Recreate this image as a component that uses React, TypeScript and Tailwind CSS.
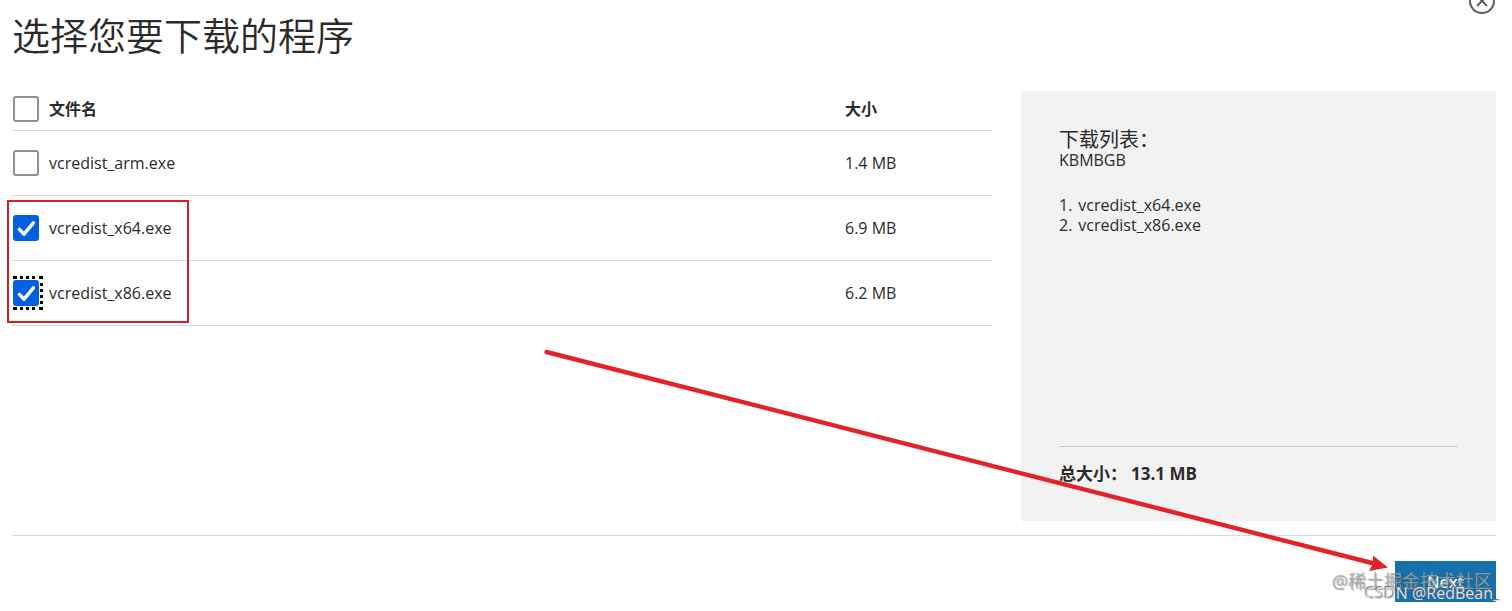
import { useState } from "react";

const files = [
  { name: "vcredist_arm.exe", size: "1.4 MB" },
  { name: "vcredist_x64.exe", size: "6.9 MB" },
  { name: "vcredist_x86.exe", size: "6.2 MB" },
];

type CheckboxProps = {
  id: string;
  label: string;
  checked: boolean;
  outlined?: boolean;
  onChange: () => void;
};

function Checkbox({ id, label, checked, outlined, onChange }: CheckboxProps) {
  return (
    <div className="flex items-center gap-[10px]">
      <span className="relative grid ml-px">
        <input
          id={id}
          type="checkbox"
          checked={checked}
          onChange={onChange}
          className="[grid-area:1/1] appearance-none size-[26px] rounded-[3px] border-2 border-[#8f8f96] bg-white checked:border-[#0460e0] checked:bg-[#0460e0]"
        />
        {checked && (
          <svg viewBox="0 0 26 26" className="[grid-area:1/1] size-[26px] pointer-events-none" fill="none" stroke="white" strokeWidth="3.4" strokeLinecap="round" strokeLinejoin="round">
            <path d="M6.4 14.4l4.6 4.8L20.4 7.8" />
          </svg>
        )}
        {outlined && (
          <span className="absolute -top-1 -bottom-1 left-0 -right-1 border-y-[3px] border-r-[3px] border-dotted border-black pointer-events-none" />
        )}
      </span>
      <label htmlFor={id}>{label}</label>
    </div>
  );
}

function Annotations() {
  return (
    <svg width="1512" height="611" className="absolute top-0 left-0 pointer-events-none" fill="none">
      <rect x="8" y="201" width="180" height="121" stroke="#d71f26" strokeWidth="2" />
      <path d="M546.5 352L1374 563.5" stroke="#e3222a" strokeWidth="4.4" strokeLinecap="round" />
      <path d="M1388 567.5L1369 571L1373 563.5L1373 555.5Z" fill="#e3222a" />
    </svg>
  );
}

function Watermark() {
  return (
    <div className="absolute top-[571px] right-5 flex flex-col items-end pointer-events-none whitespace-nowrap">
      <span className="text-lg leading-5 text-[#a6a6a6]/80 [text-shadow:1px_1px_1px_#55555580]">@稀土掘金技术社区</span>
      <span className="-mt-2 -mr-2 text-base leading-5 text-[#dddddd] [text-shadow:-1px_-1px_1px_#666666]">CSDN @RedBean_</span>
    </div>
  );
}

export default function App() {
  const [selected, setSelected] = useState(["vcredist_x64.exe", "vcredist_x86.exe"]);
  const chosen = files.filter((f) => selected.includes(f.name));
  const total = chosen.reduce((sum, f) => sum + parseFloat(f.size), 0);

  const toggle = (name: string) =>
    setSelected((prev) => (prev.includes(name) ? prev.filter((n) => n !== name) : [...prev, name]));

  const toggleAll = () => setSelected(selected.length === files.length ? [] : files.map((f) => f.name));

  return (
    <div className="relative overflow-hidden bg-white pl-3 pr-4 pb-2 text-base leading-5 text-[#2b2b2b] font-['Open_Sans','Noto_Sans_CJK_SC',sans-serif]">
      <header className="flex justify-between items-start h-[91px]">
        <h1 className="pt-[11px] text-[38px] leading-[48px] font-[350]">选择您要下载的程序</h1>
        <button type="button" aria-label="关闭" className="-mt-3 size-[28px]">
          <svg viewBox="0 0 28 28" className="size-[28px]" fill="none" stroke="#5f5f5f" strokeWidth="2">
            <circle cx="14" cy="13" r="12" />
            <path d="M9 8l10 10M19 8L9 18" />
          </svg>
        </button>
      </header>

      <main className="grid grid-cols-[980fr_475fr] gap-[29px] pb-[14px] border-b border-[#d9d9d9]">
        <table className="w-full self-start table-fixed border-collapse text-left">
          <thead>
            <tr className="h-[39px] border-b border-[#d9d9d9]">
              <th className="w-[85%] p-0 pb-[3px] font-bold">
                <Checkbox id="all" label="文件名" checked={selected.length === files.length} onChange={toggleAll} />
              </th>
              <th className="p-0 pb-[3px] font-bold">大小</th>
            </tr>
          </thead>
          <tbody>
            {files.map((file) => (
              <tr key={file.name} className="h-[65px] border-b border-[#d9d9d9]">
                <td className="p-0">
                  <Checkbox
                    id={file.name}
                    label={file.name}
                    checked={selected.includes(file.name)}
                    outlined={file.name === "vcredist_x86.exe"}
                    onChange={() => toggle(file.name)}
                  />
                </td>
                <td className="p-0">{file.size}</td>
              </tr>
            ))}
          </tbody>
        </table>

        <aside className="flex flex-col min-h-[430px] bg-[#f2f2f2] px-[38px] pt-[39px] pb-[37px]">
          <h2 className="text-xl leading-5">下载列表：</h2>
          <p>KBMBGB</p>
          <ol className="mt-[25px]">
            {chosen.map((file, i) => (
              <li key={file.name} className="flex gap-[6px]">
                <span>{i + 1}.</span>
                <span>{file.name}</span>
              </li>
            ))}
          </ol>
          <p className="mt-auto flex gap-1 border-t border-[#cccccc] pt-[17px] text-[17px] leading-5 font-bold">
            <span>总大小：</span>
            <span>{total.toFixed(1)} MB</span>
          </p>
        </aside>
      </main>

      <footer className="flex justify-end pt-[25px]">
        <button type="button" className="w-[101px] h-[41px] bg-[#1570ab] text-base font-semibold text-white">
          Next
        </button>
      </footer>

      <Annotations />
      <Watermark />
    </div>
  );
}
